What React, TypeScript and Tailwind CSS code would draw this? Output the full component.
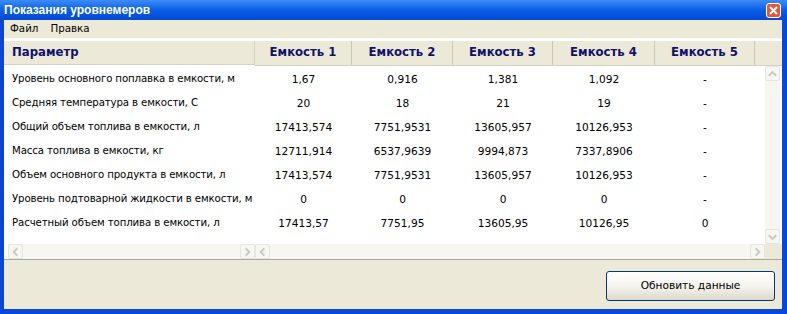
import { ReactNode } from "react";

const rows: [string, string, string, string, string, string][] = [
  ["Уровень основного поплавка в емкости, м", "1,67", "0,916", "1,381", "1,092", "-"],
  ["Средняя температура в емкости, С", "20", "18", "21", "19", "-"],
  ["Общий объем топлива в емкости, л", "17413,574", "7751,9531", "13605,957", "10126,953", "-"],
  ["Масса топлива в емкости, кг", "12711,914", "6537,9639", "9994,873", "7337,8906", "-"],
  ["Объем основного продукта в емкости, л", "17413,574", "7751,9531", "13605,957", "10126,953", "-"],
  ["Уровень подтоварной жидкости в емкости, м", "0", "0", "0", "0", "-"],
  ["Расчетный объем топлива в емкости, л", "17413,57", "7751,95", "13605,95", "10126,95", "0"],
];

const colWidths = ["w-[97px]", "w-[101px]", "w-[100px]", "w-[102px]", "w-[100px]"];

function ArrowBtn({ dir }: { dir: "left" | "right" | "up" | "down" }) {
  const d = {
    left: "M9 3 L5 7 L9 11",
    right: "M5 3 L9 7 L5 11",
    up: "M3 9 L7 5 L11 9",
    down: "M3 5 L7 9 L11 5",
  }[dir];
  return (
    <div className="w-[15px] h-[15px] shrink-0 rounded-[2px] border border-[#e6e5de] bg-[#f6f6f2] flex items-center justify-center">
      <svg width="14" height="14" viewBox="0 0 14 14">
        <path d={d} fill="none" stroke="#c9c8bf" strokeWidth="2" />
      </svg>
    </div>
  );
}

function HScroll({ className }: { className: string }) {
  return (
    <div className={`h-[15px] flex items-center bg-[#f7f6f1] ${className}`}>
      <ArrowBtn dir="left" />
      <div className="flex-1" />
      <ArrowBtn dir="right" />
    </div>
  );
}

function HeadCell({ children, className }: { children: ReactNode; className: string }) {
  return (
    <div
      className={`h-[24px] flex items-center border-r border-[#cbc7b8] text-[11.7px] font-bold text-[#10106e] ${className}`}
    >
      {children}
    </div>
  );
}

export default function App() {
  return (
    <div
      className="w-[787px] h-[314px] bg-[#0a46d8] flex flex-col overflow-hidden"
      style={{ fontFamily: '"DejaVu Sans", sans-serif' }}
    >
      {/* title bar */}
      <div className="h-[20px] shrink-0 flex items-center justify-between pl-[4px] pr-[6px] bg-gradient-to-b from-[#3b8cf5] via-[#0a5ee6] to-[#0648d4]">
        <span
          className="text-white text-[12px] font-bold"
          style={{ fontFamily: '"Liberation Sans", Arial, sans-serif' }}
        >
          Показания уровнемеров
        </span>
        <div className="w-[15px] h-[15px] rounded-[3px] border border-white bg-[#e2573b] flex items-center justify-center">
          <svg width="9" height="9" viewBox="0 0 9 9">
            <path d="M1 1 L8 8 M8 1 L1 8" stroke="white" strokeWidth="2" />
          </svg>
        </div>
      </div>

      <div className="flex-1 ml-[4px] mb-[5px] mr-[5px] bg-[#ece9d8] flex flex-col">
        {/* menu */}
        <div className="h-[17px] shrink-0 flex items-center gap-[12px] pl-[6px] text-[10.3px] text-black">
          <span>Файл</span>
          <span>Правка</span>
        </div>

        {/* grid */}
        <div className="h-[221px] shrink-0 mt-[1px] border-t border-[#faf9f4] bg-white flex text-black">
          {/* frozen column */}
          <div className="w-[251px] flex flex-col">
            <HeadCell className="bg-[#ece9d8] pl-[8px] mt-[2px] border-b border-[#d6d2c2]">Параметр</HeadCell>
            <div className="flex-1 pt-[2px] text-[10.2px] tracking-[-0.12px]">
              {rows.map((r) => (
                <div key={r[0]} className="h-[24px] flex items-center pl-[8px] whitespace-nowrap">
                  {r[0]}
                </div>
              ))}
            </div>
            <HScroll className="ml-[4px]" />
          </div>

          {/* scrolling columns */}
          <div className="flex-1 flex flex-col">
            <div className="flex mt-[2px] bg-[#ece9d8] border-b border-[#d6d2c2]">
              {["Емкость 1", "Емкость 2", "Емкость 3", "Емкость 4", "Емкость 5"].map((h, i) => (
                <HeadCell key={h} className={`justify-center ${colWidths[i]}`}>
                  {h}
                </HeadCell>
              ))}
              <div className="flex-1" />
            </div>
            <div className="flex-1 flex">
              <div className="flex-1 pt-[2px] text-[10.6px]">
                {rows.map((r) => (
                  <div key={r[0]} className="h-[24px] flex items-center">
                    {r.slice(1).map((v, i) => (
                      <div key={i} className={`text-center ${colWidths[i]}`}>
                        {v}
                      </div>
                    ))}
                  </div>
                ))}
              </div>
              <div className="w-[15px] mr-[2px] flex flex-col justify-between bg-[#f7f6f1]">
                <ArrowBtn dir="up" />
                <ArrowBtn dir="down" />
              </div>
            </div>
            <div className="flex">
              <HScroll className="flex-1" />
              <div className="w-[17px] bg-[#ece9d8]" />
            </div>
          </div>
        </div>

        {/* bottom */}
        <div className="flex-1 border-t border-[#aca899] flex items-center justify-end pr-[7px]">
          <button className="w-[169px] h-[30px] mt-[2px] rounded-[3px] border border-[#003c74] bg-gradient-to-b from-white via-[#f5f4ee] to-[#dcd9cc] text-[10.6px] text-black">
            Обновить данные
          </button>
        </div>
      </div>
    </div>
  );
}
